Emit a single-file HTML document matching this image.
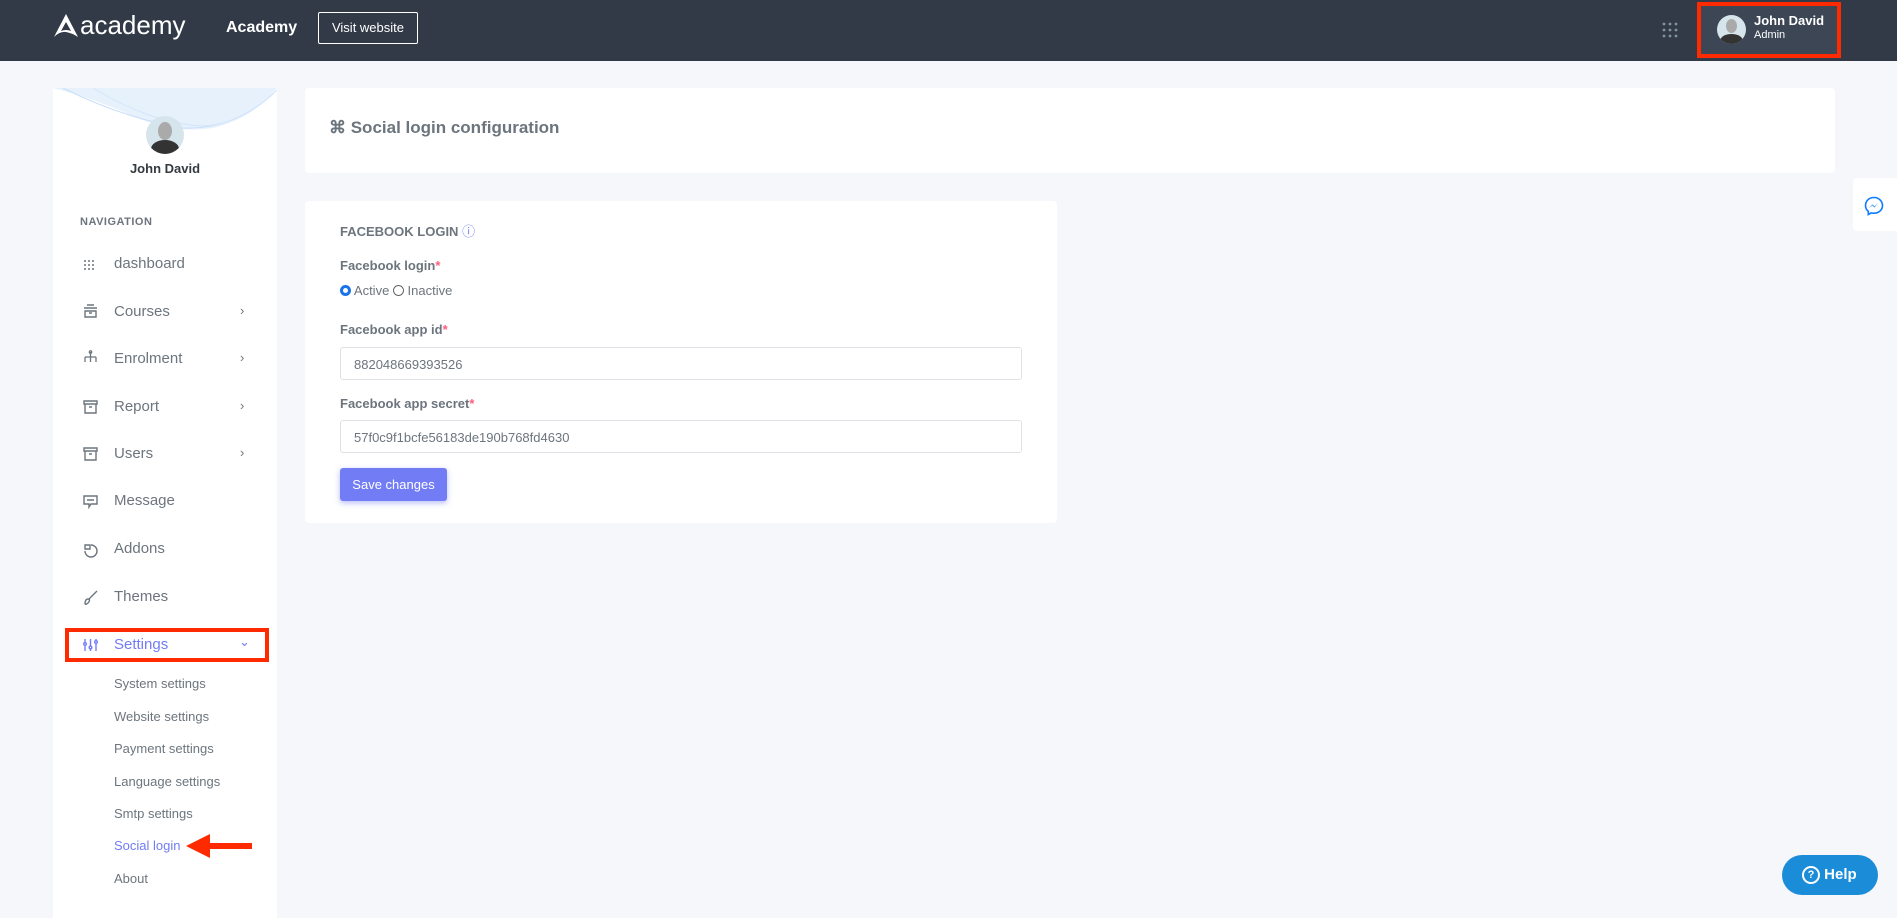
<!DOCTYPE html>
<html><head><meta charset="utf-8"><style>
*{box-sizing:border-box;margin:0;padding:0}
body{width:1897px;height:903px;overflow:hidden;background:#f6f7fb;font-family:"Liberation Sans",sans-serif;color:#6c757d;position:relative}
.hdr{position:absolute;left:0;top:0;width:1897px;height:61px;background:#313a46}
.abs{position:absolute}
.side{position:absolute;left:53px;top:88px;width:224px;height:830px;background:#fff;overflow:hidden}
.nav{position:absolute;left:114px;font-size:15px;color:#6c757d}
.ic{position:absolute;left:83px}
.chev{position:absolute;left:240px;font-size:13px;color:#6c757d}
.sub{position:absolute;left:114px;font-size:13px;color:#6c757d}
.card{position:absolute;background:#fff;border-radius:4px}
.lbl{position:absolute;left:340px;font-size:13px;color:#6c757d;font-weight:bold}
.lbl b{color:#fa5c7c}
.inp{position:absolute;left:340px;width:682px;height:33px;border:1px solid #dee2e6;border-radius:3px;font-size:13px;padding:9px 13px;color:#6c757d}
</style></head><body>
<div class="hdr">
 <svg class="abs" style="left:52px;top:13px" width="28" height="26" viewBox="0 0 28 26"><path d="M14 1 L2 24 Q8 18 14 19 Q20 20 26 24 Z M14 9 L9 18 Q14 16 19 18 Z" fill="#fff" fill-rule="evenodd"/></svg>
 <div class="abs" style="left:80px;top:10px;font-size:26px;color:#fff">academy</div>
 <div class="abs" style="left:226px;top:19px;font-size:16px;color:#fff;font-weight:bold">Academy</div>
 <div class="abs" style="left:318px;top:12px;width:100px;height:32px;border:1px solid #fff;border-radius:2px;color:#fff;font-size:13px;text-align:center;line-height:30px">Visit website</div>
 <svg class="abs" style="left:1662px;top:22px" width="16" height="16"><g fill="#8391a2"><circle cx="2" cy="2" r="1.4"/><circle cx="8" cy="2" r="1.4"/><circle cx="14" cy="2" r="1.4"/><circle cx="2" cy="8" r="1.4"/><circle cx="8" cy="8" r="1.4"/><circle cx="14" cy="8" r="1.4"/><circle cx="2" cy="14" r="1.4"/><circle cx="8" cy="14" r="1.4"/><circle cx="14" cy="14" r="1.4"/></g></svg>
 <div class="abs" style="left:1700px;top:4px;width:138px;height:53px;background:#3c4655"></div>
 <div class="abs" style="left:1697px;top:2px;width:144px;height:56px;border:4px solid #ff2a00"></div>
 <div class="abs" style="left:1717px;top:15px;width:29px;height:29px;border-radius:50%;background:#d6e4ec;overflow:hidden"><div style="position:absolute;left:3px;top:19px;width:23px;height:14px;border-radius:50%;background:#333"></div><div style="position:absolute;left:9px;top:4px;width:11px;height:14px;border-radius:50%;background:#aaa"></div></div>
 <div class="abs" style="left:1754px;top:13px;color:#fff;font-size:13px;font-weight:bold">John David</div>
 <div class="abs" style="left:1754px;top:29px;color:#fff;font-size:11px">Admin</div>
</div>

<div class="side">
 <svg class="abs" style="left:0;top:0" width="224" height="50"><path d="M0 0 H224 Q200 30 160 40 Q120 46 80 28 Q40 10 0 0Z" fill="#e6f1fc"/><path d="M10 0 Q70 30 130 40 Q180 42 220 6" stroke="#c7defa" fill="none"/><path d="M40 0 Q100 36 150 38 Q190 36 224 2" stroke="#d4e6fb" fill="none"/></svg>
 <div class="abs" style="left:93px;top:28px;width:38px;height:38px;border-radius:50%;background:#d6e4ec;overflow:hidden"><div style="position:absolute;left:5px;top:24px;width:28px;height:18px;border-radius:50%;background:#333"></div><div style="position:absolute;left:12px;top:6px;width:14px;height:18px;border-radius:50%;background:#aaa"></div></div>
 <div class="abs" style="left:0;width:224px;top:73px;text-align:center;font-size:13px;font-weight:bold;color:#343a40">John David</div>
</div>
<div class="abs" style="left:80px;top:216px;font-size:11px;font-weight:bold;color:#6c757d;letter-spacing:.5px">NAVIGATION</div>
<svg class="ic" style="top:258px" width="14" height="14"><g fill="#6c757d"><circle cx="2" cy="3" r="1"/><circle cx="6" cy="3" r="1"/><circle cx="10" cy="3" r="1"/><circle cx="2" cy="7" r="1"/><circle cx="6" cy="7" r="1"/><circle cx="10" cy="7" r="1"/><circle cx="2" cy="11" r="1"/><circle cx="6" cy="11" r="1"/><circle cx="10" cy="11" r="1"/></g></svg><div class="nav" style="top:255px">dashboard</div>
<svg class="ic" style="top:304px" width="15" height="14" fill="none" stroke="#6c757d" stroke-width="1.4"><path d="M4 1h7M1 4h13M2 7h11v6H2z M6 9h3"/></svg><div class="nav" style="top:303px">Courses</div><div class="chev" style="top:303px">›</div>
<svg class="ic" style="top:350px" width="15" height="15" fill="none" stroke="#6c757d" stroke-width="1.3"><path d="M7.5 2v5M2 7h11M2 7v5M7.5 7v5M13 7v5"/><circle cx="7.5" cy="2" r="1.2"/></svg><div class="nav" style="top:350px">Enrolment</div><div class="chev" style="top:350px">›</div>
<svg class="ic" style="top:400px" width="15" height="14" fill="none" stroke="#6c757d" stroke-width="1.4"><path d="M1 1h13v3H1zM2 4v9h11V4M6 7h3"/></svg><div class="nav" style="top:398px">Report</div><div class="chev" style="top:398px">›</div>
<svg class="ic" style="top:447px" width="15" height="14" fill="none" stroke="#6c757d" stroke-width="1.4"><path d="M1 1h13v3H1zM2 4v9h11V4M6 7h3"/></svg><div class="nav" style="top:445px">Users</div><div class="chev" style="top:445px">›</div>
<svg class="ic" style="top:495px" width="15" height="14" fill="none" stroke="#6c757d" stroke-width="1.4"><path d="M1 1h13v8H8l-2 3V9H1zM4 5h7"/></svg><div class="nav" style="top:492px">Message</div>
<svg class="ic" style="top:543px" width="15" height="15" fill="none" stroke="#6c757d" stroke-width="1.4"><path d="M8 2a6 6 0 1 1-6 6M2 6V2h5v4z"/></svg><div class="nav" style="top:540px">Addons</div>
<svg class="ic" style="top:590px" width="15" height="15" fill="none" stroke="#6c757d" stroke-width="1.4"><path d="M14 1L6 9M2 14c0-3 1-5 3-5s2 2 0 4-3 1-3 1"/></svg><div class="nav" style="top:588px">Themes</div>
<div class="abs" style="left:65px;top:628px;width:204px;height:34px;border:4px solid #ff2a00"></div>
<svg class="ic" style="top:638px" width="15" height="14" fill="none" stroke="#727cf5" stroke-width="1.4"><path d="M2 1v3M2 8v5M7.5 1v7M7.5 11v2M13 1v1M13 6v7"/><circle cx="2" cy="6" r="1.3"/><circle cx="7.5" cy="9.5" r="1.3"/><circle cx="13" cy="4" r="1.3"/></svg><div class="nav" style="top:636px;color:#727cf5">Settings</div><div class="abs" style="left:239px;top:634px;color:#727cf5;font-size:13px">⌄</div>
<div class="sub" style="top:676px">System settings</div>
<div class="sub" style="top:709px">Website settings</div>
<div class="sub" style="top:741px">Payment settings</div>
<div class="sub" style="top:774px">Language settings</div>
<div class="sub" style="top:806px">Smtp settings</div>
<div class="sub" style="top:838px;color:#727cf5">Social login</div>
<svg class="abs" style="left:186px;top:833px" width="68" height="26"><path d="M0 13 L24 1 V10 H66 V16 H24 V25Z" fill="#ff2a00"/></svg>
<div class="sub" style="top:871px">About</div>

<div class="card" style="left:305px;top:88px;width:1530px;height:85px"></div>
<div class="abs" style="left:329px;top:118px;font-size:17px;font-weight:bold;color:#6c757d">⌘ Social login configuration</div>

<div class="card" style="left:305px;top:201px;width:752px;height:322px"></div>
<div class="abs" style="left:340px;top:221px;font-size:13px;font-weight:bold;color:#6c757d">FACEBOOK LOGIN <span style="color:#727cf5;font-weight:normal">ⓘ</span></div>
<div class="lbl" style="top:258px">Facebook login<b>*</b></div>
<div class="abs" style="left:340px;top:283px;font-size:13px;color:#6c757d"><span style="display:inline-block;width:11px;height:11px;border-radius:50%;border:3px solid #1a73e8;vertical-align:-1px"></span> Active <span style="display:inline-block;width:11px;height:11px;border-radius:50%;border:1px solid #666;vertical-align:-1px"></span> Inactive</div>
<div class="lbl" style="top:322px">Facebook app id<b>*</b></div>
<div class="inp" style="top:347px">882048669393526</div>
<div class="lbl" style="top:396px">Facebook app secret<b>*</b></div>
<div class="inp" style="top:420px">57f0c9f1bcfe56183de190b768fd4630</div>
<div class="abs" style="left:340px;top:468px;width:107px;height:33px;background:#727cf5;border-radius:3px;color:#fff;font-size:13px;text-align:center;line-height:33px;box-shadow:0 2px 6px rgba(114,124,245,.5)">Save changes</div>

<div class="abs" style="left:1853px;top:178px;width:50px;height:53px;background:#fff;border-radius:4px"></div>
<svg class="abs" style="left:1864px;top:196px" width="20" height="20" viewBox="0 0 20 20"><path d="M10 1.5C5 1.5 1.5 5 1.5 9.5c0 2.5 1 4.5 2.8 5.8V18.5l3-1.6c.8.2 1.7.3 2.7.3 5 0 8.5-3.5 8.5-7.7S15 1.5 10 1.5Z" fill="none" stroke="#0a7cff" stroke-width="1.6"/><path d="M5 12l3.5-3.5 2 2L14 7l-3.5 4.5-2-2Z" fill="#0a7cff"/></svg>
<div class="abs" style="left:1782px;top:855px;width:96px;height:40px;background:#1a8cd8;border-radius:20px;color:#fff;font-size:15px;font-weight:bold;line-height:40px;padding-left:20px"><span style="display:inline-block;width:18px;height:18px;border:2px solid #fff;border-radius:50%;font-size:11px;line-height:14px;text-align:center;vertical-align:1px">?</span> Help</div>
</body></html>
